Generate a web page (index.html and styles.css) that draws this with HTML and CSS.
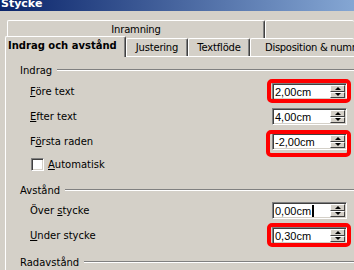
FILE: index.html
```html
<!DOCTYPE html>
<html lang="sv">

<head>
  <meta charset="UTF-8" />
  <meta name="viewport" content="width=device-width, initial-scale=1.0" />
  <title>Stycke</title>
  <link rel="stylesheet" href="styles.css">
</head>

<body>
  <div class="titlebar"><span class="title">Stycke</span></div>

  <div class="dialog">
    <div class="tabrow back">
      <div class="tab wide">Inramning</div>
      <div class="tab rest"></div>
    </div>
    <div class="tabrow front">
      <div class="tab active">Indrag och avstånd</div>
      <div class="tab">Justering</div>
      <div class="tab">Textflöde</div>
      <div class="tab rest">Disposition &amp; numrering</div>
    </div>

    <div class="panel">
      <div class="group first"><span>Indrag</span><i class="line"></i></div>

      <div class="row">
        <label><u>F</u>öre text</label>
        <div class="spin hl">
          <span class="value">2,00cm</span>
          <span class="arrows"><b class="up"></b><b class="down"></b></span>
        </div>
      </div>
      <div class="row">
        <label><u>E</u>fter text</label>
        <div class="spin">
          <span class="value">4,00cm</span>
          <span class="arrows"><b class="up"></b><b class="down"></b></span>
        </div>
      </div>
      <div class="row">
        <label>F<u>ö</u>rsta raden</label>
        <div class="spin hl tall">
          <span class="value">-2,00cm</span>
          <span class="arrows"><b class="up"></b><b class="down"></b></span>
        </div>
      </div>
      <div class="check">
        <span class="box"></span>
        <label><u>A</u>utomatisk</label>
      </div>

      <div class="group"><span>Avstånd</span><i class="line"></i></div>

      <div class="row">
        <label>Över <u>s</u>tycke</label>
        <div class="spin">
          <span class="value">0,00cm<span class="caret"></span></span>
          <span class="arrows"><b class="up"></b><b class="down"></b></span>
        </div>
      </div>
      <div class="row">
        <label><u>U</u>nder stycke</label>
        <div class="spin hl">
          <span class="value">0,30cm</span>
          <span class="arrows"><b class="up"></b><b class="down"></b></span>
        </div>
      </div>

      <div class="group last"><span>Radavstånd</span><i class="line"></i></div>
    </div>
  </div>
</body>

</html>
```

FILE: styles.css
```css
body {
  margin: 0;
  height: 270px;
  overflow: hidden;
  background-color: #d4d0c8;
  font-family: 'DejaVu Sans', 'Liberation Sans', sans-serif;
  font-size: 10px;
  color: #000;
}

.titlebar {
  height: 11px;
  overflow: hidden;
  background: linear-gradient(to right, #0a246a, #a6caf0);
  background-size: 450px 100%;
  background-repeat: no-repeat;
  background-color: #a6caf0;
}

.title {
  display: block;
  padding-left: 1px;
  line-height: 7px;
  font-size: 11px;
  font-weight: bold;
  color: #fff;
}

.dialog {
  margin: 9px 0 0 5px;
}

/* tabs */
.tabrow {
  display: flex;
  white-space: nowrap;
}

.tabrow.back {
  margin-left: 2px;
  height: 18px;
}

.tabrow.front {
  margin-top: -2px;
  height: 20px;
  align-items: flex-end;
}

.tab {
  box-sizing: border-box;
  height: 18px;
  line-height: 17px;
  text-align: center;
  letter-spacing: -0.2px;
  border-top: 1px solid #fff;
  border-left: 1px solid #fff;
  border-right: 1px solid #404040;
  box-shadow: inset -1px 0 #808080;
  border-radius: 2px 2px 0 0;
  background-color: #d4d0c8;
  overflow: hidden;
}

.tabrow.front .tab {
  width: 62px;
}

.tab.wide {
  width: 258px;
}

.tabrow .tab.rest {
  flex: 1;
  width: auto;
  text-align: left;
  padding-left: 14px;
  letter-spacing: -0.3px;
  border-right: none;
  box-shadow: none;
}

.tabrow.front .tab.active {
  position: relative;
  width: 121px;
  height: 21px;
  margin-bottom: -1px;
  padding-left: 2px;
  text-align: left;
  letter-spacing: 0;
  font-weight: bold;
}

/* page */
.panel {
  height: 214px;
  border-top: 1px solid #fff;
  border-left: 1px solid #fff;
}

.group {
  display: flex;
  align-items: center;
  gap: 5px;
  height: 16px;
  padding-left: 14px;
  margin-top: 8px;
}

.group.first {
  margin-top: 5px;
  margin-bottom: 1px;
}

.group.last {
  margin-top: 6px;
}

.line {
  flex: 1;
  border-top: 1px solid #808080;
  border-bottom: 1px solid #fff;
}

.row {
  display: flex;
  align-items: center;
  height: 25px;
  padding: 0 7px 0 24px;
}

.row label {
  flex: 1;
}

.spin {
  position: relative;
  box-sizing: border-box;
  display: flex;
  width: 75px;
  height: 17px;
  background-color: #fff;
  border-top: 1px solid #808080;
  border-left: 1px solid #808080;
  border-bottom: 1px solid #fff;
  border-right: 1px solid #fff;
  box-shadow: inset 1px 1px #404040, inset -1px -1px #d4d0c8;
}

.value {
  flex: 1;
  display: flex;
  align-items: center;
  padding-left: 2px;
  font-size: 11px;
  font-family: 'Liberation Sans', sans-serif;
}

.caret {
  display: inline-block;
  width: 2px;
  height: 12px;
  margin-left: 1px;
  background-color: #000;
}

.arrows {
  display: flex;
  flex-direction: column;
  width: 15px;
  margin: 1px 1px 1px 0;
}

.arrows b {
  flex: 1;
  display: flex;
  align-items: center;
  justify-content: center;
  box-sizing: border-box;
  background-color: #d4d0c8;
  border-top: 1px solid #fff;
  border-left: 1px solid #fff;
  border-right: 1px solid #404040;
  border-bottom: 1px solid #404040;
}

.arrows b::before {
  content: '';
  width: 0;
  height: 0;
  border-left: 3px solid transparent;
  border-right: 3px solid transparent;
}

.arrows .up::before {
  border-bottom: 3px solid #000;
}

.arrows .down::before {
  border-top: 3px solid #000;
}

/* red marks drawn over the screenshot */
.hl::after {
  content: '';
  position: absolute;
  top: -5px;
  bottom: -4px;
  left: -6px;
  right: -5px;
  border: 4px solid #ff0000;
  border-radius: 5px;
}

.hl.tall::after {
  top: -4px;
  bottom: -8px;
  left: -7px;
}

.check {
  display: flex;
  align-items: center;
  gap: 4px;
  height: 20px;
  padding-left: 25px;
}

.box {
  box-sizing: border-box;
  width: 13px;
  height: 13px;
  background-color: #fff;
  border-top: 1px solid #808080;
  border-left: 1px solid #808080;
  border-bottom: 1px solid #fff;
  border-right: 1px solid #fff;
  box-shadow: inset 1px 1px #404040, inset -1px -1px #d4d0c8;
}
```
